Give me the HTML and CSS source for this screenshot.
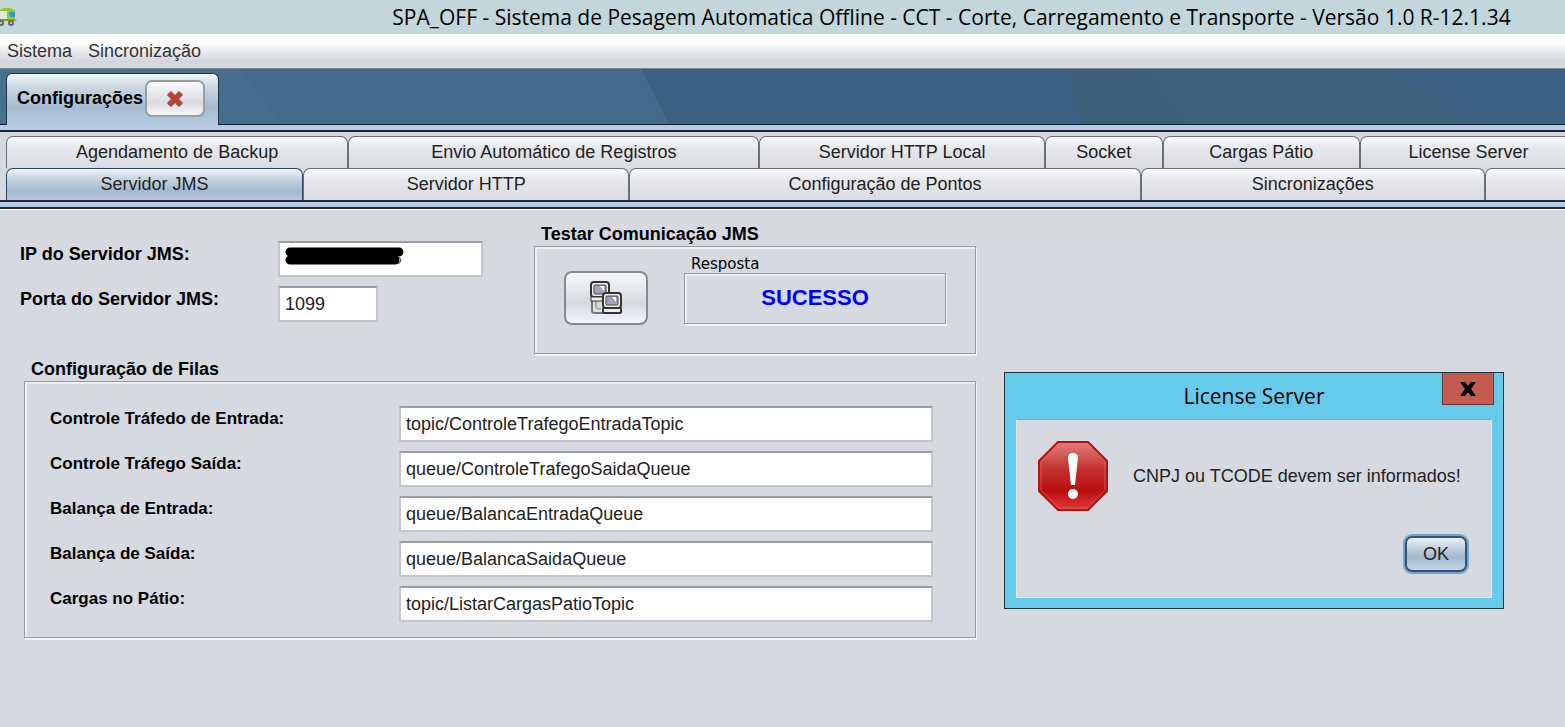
FILE: index.html
```html
<!DOCTYPE html>
<html lang="pt-BR">
<head>
    <meta charset="UTF-8">
    <meta name="viewport" content="width=device-width, initial-scale=1.0">
    <title>SPA_OFF</title>
    <link rel="stylesheet" href="styles.css">
</head>
<body>

    <header class="title-bar">
        <svg class="truck" width="18" height="20" viewBox="0 0 18 20">
            <path d="M0 3 Q4 0 9 1 L15 3 V14 H0 Z" fill="#8fce1e"/>
            <path d="M0 4 H7 V12 H0 Z" fill="#e2e5e0"/>
            <path d="M9 5 H15 V10 H10 Z" fill="#2b9bd0"/>
            <path d="M0 13 H15" stroke="#6fa51c" stroke-width="2"/>
            <circle cx="1" cy="16" r="3" fill="#666"/>
            <circle cx="1" cy="16" r="1" fill="#ddd"/>
            <circle cx="11" cy="16" r="3" fill="#666"/>
            <circle cx="11" cy="16" r="1" fill="#ddd"/>
            <path d="M13 12 H17 L15 15 Z" fill="#f08a24"/>
        </svg>
        <h1>SPA_OFF - Sistema de Pesagem Automatica Offline - CCT - Corte, Carregamento e Transporte - Versão 1.0 R-12.1.34</h1>
    </header>

    <nav class="menu-bar">
        <a href="#">Sistema</a>
        <a href="#">Sincronização</a>
    </nav>

    <div class="desktop">
        <svg class="backdrop" viewBox="0 0 1565 56" preserveAspectRatio="none">
            <defs>
                <linearGradient id="sky" x1="0" x2="1">
                    <stop offset="0" stop-color="#48708f"/>
                    <stop offset="1" stop-color="#44698b"/>
                </linearGradient>
            </defs>
            <rect width="1565" height="56" fill="#3b5f80"/>
            <path d="M0 0 H641 L669 56 H0 Z" fill="url(#sky)"/>
            <path d="M240 0 L282 56 H669 L641 0 Z" fill="#456b8c"/>
            <path d="M1070 0 L1080 56 H1190 L1140 0 Z" fill="#3c5e78"/>
            <path d="M1140 0 H1390 L1470 56 H1190 Z" fill="#3c5f7c"/>
        </svg>
        <div class="window-tab">
            <span>Configurações</span>
            <button class="close-tab" aria-label="Fechar">
                <svg width="20" height="18" viewBox="0 0 20 18">
                    <path d="M4 3 L16 15 M16 3 L4 15" stroke="#6b6b70" stroke-width="6"/>
                    <path d="M4 3 L16 15 M16 3 L4 15" stroke="#c4402a" stroke-width="4"/>
                </svg>
            </button>
        </div>
    </div>
    <div class="tab-line"></div>

    <div class="tabs">
        <div class="tab-row row-back">
            <button>Agendamento de Backup</button>
            <button>Envio Automático de Registros</button>
            <button>Servidor HTTP Local</button>
            <button>Socket</button>
            <button>Cargas Pátio</button>
            <button>License Server</button>
        </div>
        <div class="tab-row row-front">
            <button class="active">Servidor JMS</button>
            <button>Servidor HTTP</button>
            <button>Configuração de Pontos</button>
            <button>Sincronizações</button>
            <button aria-label="Mais"></button>
        </div>
    </div>
    <div class="tab-line"></div>

    <main class="content">
        <div class="settings">
            <form class="server">
                <div class="field">
                    <label for="ip">IP do Servidor JMS:</label>
                    <div class="masked">
                        <input type="text" id="ip" class="ip">
                        <svg class="mask" width="120" height="20" viewBox="0 0 120 20">
                            <path d="M5 5 H114 M5 13 H110" stroke="#000" stroke-width="9" stroke-linecap="round"/>
                            <path d="M114 10 Q118 14 113 17" stroke="#333" stroke-width="1" fill="none"/>
                        </svg>
                    </div>
                </div>
                <div class="field">
                    <label for="port">Porta do Servidor JMS:</label>
                    <input type="text" id="port" class="port" value="1099">
                </div>
            </form>

            <section class="test">
                <h2>Testar Comunicação JMS</h2>
                <div class="panel test-panel">
                    <button class="test-button" aria-label="Testar">
                        <svg width="34" height="34" viewBox="0 0 34 34">
                            <path d="M3 18 V30 Q3 32 6 32 H14" fill="none" stroke="#77777a" stroke-width="2"/>
                            <path d="M7 20 V26 Q7 28 12 28" fill="none" stroke="#aaa" stroke-width="2"/>
                            <rect x="2" y="1" width="18" height="15" rx="3" fill="#f0efec" stroke="#333" stroke-width="2"/>
                            <rect x="5" y="4" width="12" height="9" rx="1" fill="#a5a3b8" stroke="#444"/>
                            <path d="M11 5 H15 V10 Z" fill="#fff"/>
                            <rect x="2" y="16" width="15" height="4" fill="#eee" stroke="#333"/>
                            <rect x="14" y="12" width="18" height="15" rx="3" fill="#f0efec" stroke="#333" stroke-width="2"/>
                            <rect x="17" y="15" width="12" height="9" rx="1" fill="#a5a3b8" stroke="#444"/>
                            <path d="M23 16 H27 V21 Z" fill="#fff"/>
                            <rect x="14" y="27" width="18" height="5" rx="1" fill="#eee" stroke="#333" stroke-width="2"/>
                        </svg>
                    </button>
                    <div class="answer">
                        <h3>Resposta</h3>
                        <output class="panel">SUCESSO</output>
                    </div>
                </div>
            </section>

            <section class="queues">
                <h2>Configuração de Filas</h2>
                <form class="panel queue-panel">
                    <div class="field">
                        <label for="q1">Controle Tráfedo de Entrada:</label>
                        <input type="text" id="q1" value="topic/ControleTrafegoEntradaTopic">
                    </div>
                    <div class="field">
                        <label for="q2">Controle Tráfego Saída:</label>
                        <input type="text" id="q2" value="queue/ControleTrafegoSaidaQueue">
                    </div>
                    <div class="field">
                        <label for="q3">Balança de Entrada:</label>
                        <input type="text" id="q3" value="queue/BalancaEntradaQueue">
                    </div>
                    <div class="field">
                        <label for="q4">Balança de Saída:</label>
                        <input type="text" id="q4" value="queue/BalancaSaidaQueue">
                    </div>
                    <div class="field">
                        <label for="q5">Cargas no Pátio:</label>
                        <input type="text" id="q5" value="topic/ListarCargasPatioTopic">
                    </div>
                </form>
            </section>
        </div>
    </main>

    <div class="dialog" role="dialog" aria-labelledby="dialog-title">
        <h2 id="dialog-title">License Server</h2>
        <button class="dialog-close" aria-label="Fechar">
            <svg width="18" height="16" viewBox="0 0 18 16">
                <path d="M1 1 H6 L9 5 L12 1 H17 L12 8 L17 15 H12 L9 11 L6 15 H1 L6 8 Z" fill="#000"/>
            </svg>
        </button>
        <div class="dialog-body">
            <div class="message">
                <svg width="70" height="70" viewBox="0 0 70 70">
                    <defs>
                        <linearGradient id="red" x1="0" y1="0" x2="0" y2="1">
                            <stop offset="0" stop-color="#e08080"/>
                            <stop offset="0.4" stop-color="#c53030"/>
                            <stop offset="0.72" stop-color="#b80f0f"/>
                            <stop offset="1" stop-color="#e23a3a"/>
                        </linearGradient>
                    </defs>
                    <path d="M20 1 H50 L69 20 V50 L50 69 H20 L1 50 V20 Z" fill="url(#red)" stroke="#b01515" stroke-width="2"/>
                    <path d="M21 3 H49 L67 21 V49 L49 67 H21 L3 49 V21 Z" fill="none" stroke="#e27070" stroke-opacity="0.6"/>
                    <path d="M30 17 Q30 12 35 12 Q40 12 40 17 L37 44 H33 Z" fill="#fff"/>
                    <circle cx="35" cy="53" r="5" fill="#fff"/>
                </svg>
                <p>CNPJ ou TCODE devem ser informados!</p>
            </div>
            <button class="ok">OK</button>
        </div>
    </div>

</body>
</html>
```
FILE: styles.css
```css
* {
    box-sizing: border-box;
}
body {
    margin: 0;
    min-height: 100vh;
    background: #d6d9e0;
    color: #000;
    font-family: 'Liberation Sans', Arial, sans-serif;
    font-size: 18px;
    overflow: hidden;
}
h1, h2, h3, p {
    margin: 0;
}
button, input {
    font-family: inherit;
    font-size: 18px;
    color: #222;
}
button {
    display: flex;
    align-items: center;
    justify-content: center;
    padding: 0;
}

/* Title and menu */
.title-bar {
    display: flex;
    align-items: center;
    height: 34px;
    background: #c3d6db;
}
.title-bar h1 {
    flex: 1;
    padding-left: 320px;
    font-family: 'Open Sans', 'Noto Sans', sans-serif;
    font-size: 21px;
    font-weight: normal;
    text-align: center;
    white-space: nowrap;
}
.menu-bar {
    display: flex;
    gap: 16px;
    align-items: center;
    height: 35px;
    padding: 0 7px;
    background: linear-gradient(#fafafa, #fff 25%, #e6e8ec 55%, #d3d6dd 80%, #d6d9e0);
    border-bottom: 1px solid #808791;
}
.menu-bar a {
    color: #333;
    text-decoration: none;
}

/* Blue strip with the open window */
.desktop {
    position: relative;
    display: flex;
    align-items: flex-end;
    height: 56px;
    padding-left: 6px;
    border-bottom: 1px solid #0c1c33;
}
.backdrop {
    position: absolute;
    inset: 0;
    width: 100%;
    height: 100%;
}
.window-tab {
    position: relative;
    display: flex;
    align-items: center;
    gap: 2px;
    height: 52px;
    margin-bottom: -1px;
    padding: 0 13px 2px 10px;
    border: 1px solid #1c3450;
    border-bottom: 0;
    border-radius: 6px 6px 0 0;
    background: linear-gradient(#f4f6f9, #ccd8e3 25%, #a6bcd1 65%, #b5cadf);
    font-weight: bold;
}
.close-tab {
    width: 60px;
    height: 37px;
    border: 2px solid #9a9da3;
    border-radius: 7px;
    background: linear-gradient(#fafafb, #e0e2e7 50%, #d8dbe1 60%, #f3f5fb);
}
.tab-line {
    height: 7px;
    background: #b6cbe1;
    border-bottom: 2px solid #23263a;
}

/* Tab pane */
.tabs {
    padding: 4px 0 0 6px;
    border-bottom: 2px solid #23263a;
    overflow: hidden;
}
.tab-row {
    display: grid;
    margin-right: -12px;
}
.row-back {
    grid-template-columns: 342fr 411fr 285fr 118fr 197fr 217fr;
}
.row-front {
    grid-template-columns: 297fr 326fr 511fr 344fr 92fr;
}
.tab-row button {
    height: 32px;
    min-width: 0;
    border: 1px solid #6c6e78;
    border-bottom: 0;
    border-radius: 7px 7px 0 0;
    background: linear-gradient(#fbfbfc, #e7e8ec 35%, #dfe0e5 75%, #d8dae1);
    color: #222;
    white-space: nowrap;
}
.tab-row .active {
    height: 34px;
    margin-bottom: -2px;
    padding-bottom: 2px;
    border-color: #2c4560;
    background: linear-gradient(#f4f6f9, #ccd8e3 25%, #a4b9cf 65%, #b3c8dd);
}

/* Settings */
.content {
    display: grid;
    grid-template-columns: 976fr 589fr;
    border-top: 1px solid #fff;
}
.settings {
    display: grid;
    grid-template-columns: 514fr 442fr;
    row-gap: 3px;
    padding-left: 20px;
}
.field {
    display: flex;
    align-items: flex-start;
    height: 45px;
}
.field label {
    font-weight: bold;
    line-height: 26px;
}
.field input {
    height: 36px;
    padding: 0 5px;
    border: 2px solid #c3c5ca;
    border-top-color: #999ca1;
    background: #fff;
    outline: none;
}
.server {
    padding-top: 31px;
}
.server label {
    flex: 0 0 258px;
}
.masked {
    position: relative;
}
.mask {
    position: absolute;
    left: 7px;
    top: 6px;
}
.field .ip {
    width: 205px;
}
.field .port {
    width: 100px;
}
h2 {
    padding-left: 7px;
    font-size: 18px;
    line-height: 24px;
}
.panel {
    border: 1px solid #999ba1;
    box-shadow: inset 2px 2px 0 #eceef0, 1px 2px 0 #f4f5f7;
}
.test {
    padding-top: 12px;
}
.test-panel {
    display: flex;
    gap: 36px;
    height: 108px;
    padding: 8px 29px;
}
.test-button {
    flex: 0 0 84px;
    height: 54px;
    margin-top: 16px;
    border: 2px solid #868a90;
    border-radius: 8px;
    background: linear-gradient(#f8f9fa, #dfe1e6 45%, #d4d7dd 60%, #f2f6fc);
}
.answer {
    flex: 1;
}
.answer h3 {
    padding-left: 7px;
    font-family: 'DejaVu Sans', sans-serif;
    font-size: 15px;
    font-weight: normal;
    line-height: 18px;
}
.answer output {
    display: flex;
    align-items: center;
    justify-content: center;
    height: 51px;
    padding-bottom: 2px;
    color: #0000ff;
    font-size: 22px;
    font-weight: bold;
}
.queues {
    grid-column: 1 / 3;
    padding-left: 4px;
}
.queue-panel {
    height: 257px;
    padding: 24px 42px 0 25px;
}
.queue-panel label {
    flex: 0 0 349px;
    font-size: 17px;
}
.queue-panel input {
    flex: 1;
    min-width: 0;
}

/* License message */
.dialog {
    position: absolute;
    top: 372px;
    right: 61px;
    width: 500px;
    padding: 0 11px 10px;
    border: 1px solid #20343f;
    background: #66caea;
}
.dialog h2 {
    padding: 0;
    font-family: 'Open Sans', 'Noto Sans', sans-serif;
    font-size: 21px;
    font-weight: normal;
    line-height: 46px;
    text-align: center;
}
.dialog-close {
    position: absolute;
    top: 0;
    right: 9px;
    width: 52px;
    height: 32px;
    border: 1px solid #6e3534;
    border-top: 0;
    background: #c25b50;
}
.dialog-body {
    padding: 21px 22px 25px 21px;
    background: #d6d9e0;
    border: 1px solid #e6e6e8;
    border-top-color: #7fa5b8;
}
.message {
    display: flex;
    align-items: center;
    gap: 25px;
    white-space: nowrap;
}
.message p {
    color: #222;
}
.ok {
    width: 62px;
    height: 36px;
    margin: 25px 2px 0 auto;
    border: 2px solid #38536d;
    border-radius: 7px;
    background: linear-gradient(#edf1f5, #b9c9d8 40%, #a3b8cd 60%, #bdd5ea);
    box-shadow: 0 0 0 2px #73a4d1;
}
```
